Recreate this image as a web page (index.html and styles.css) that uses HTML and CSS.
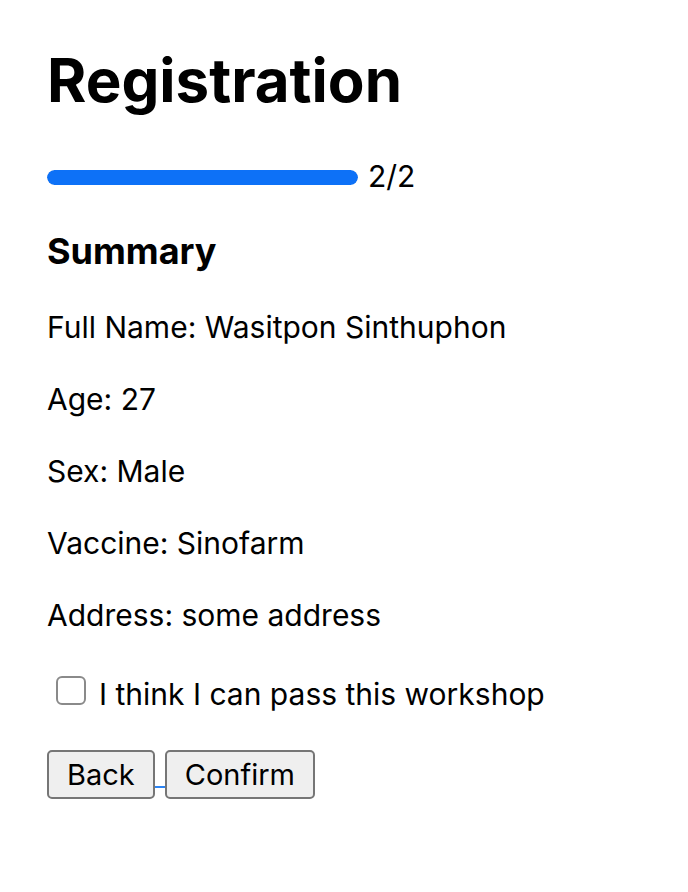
FILE: index.html
```html
<!DOCTYPE html>
<html lang="en">
<head>
<meta charset="utf-8">
<title>Registration</title>
<link rel="stylesheet" href="styles.css">
</head>
<body>
<main class="page">
  <h1 class="title">Registration</h1>
  <div class="progress-row">
    <div class="progress"><div class="progress-fill" style="width:100%"></div></div>
    <span class="progress-label">2/2</span>
  </div>
  <h3 class="section-title">Summary</h3>
  <div class="summary">
    <p class="field">Full Name: Wasitpon Sinthuphon</p>
    <p class="field">Age: 27</p>
    <p class="field">Sex: Male</p>
    <p class="field">Vaccine: Sinofarm</p>
    <p class="field">Address: some address</p>
  </div>
  <label class="check-row">
    <input type="checkbox" class="check">
    <span>I think I can pass this workshop</span>
  </label>
  <div class="actions">
    <button class="btn">Back</button><span class="link-gap"></span><button class="btn">Confirm</button>
  </div>
</main>
</body>
</html>
```
FILE: styles.css
```css
html, body {
  margin: 0;
  padding: 0;
  background: #fff;
}
body {
  font-family: Inter, "Noto Sans", "Liberation Sans", sans-serif;
  color: #000;
}
.page {
  padding: 43px 47px 0 47px;
  display: flex;
  flex-direction: column;
  align-items: flex-start;
}
.title {
  margin: 0;
  font-size: 60px;
  line-height: 74px;
  font-weight: 700;
}
.progress-row {
  margin-top: 41px;
  display: flex;
  align-items: center;
  gap: 10px;
  height: 36px;
}
.progress {
  width: 311px;
  height: 15px;
  border-radius: 8px;
  background: #e6e6e6;
  overflow: hidden;
  position: relative;
  top: 1px;
}
.progress-fill {
  height: 100%;
  background: #0d71f7;
  border-radius: 8px;
}
.progress-label {
  font-size: 30px;
  line-height: 36px;
}
.section-title {
  margin: 35px 0 0 0;
  font-size: 36px;
  line-height: 44px;
  font-weight: 700;
}
.summary {
  margin-top: 36px;
  display: flex;
  flex-direction: column;
  gap: 36px;
}
.field {
  margin: 0;
  font-size: 30px;
  line-height: 36px;
}
.check-row {
  margin-top: 43px;
  display: flex;
  align-items: flex-start;
  gap: 13px;
  font-size: 30px;
  line-height: 36px;
}
.check {
  appearance: none;
  -webkit-appearance: none;
  margin: 0 0 0 9px;
  width: 30px;
  height: 29px;
  border: 2px solid #8a8a8a;
  border-radius: 6px;
  background: #fff;
  box-sizing: border-box;
}
.actions {
  margin-top: 38px;
  display: flex;
  align-items: flex-start;
}
.btn {
  font-family: inherit;
  font-size: 29px;
  line-height: 36px;
  height: 49px;
  padding: 0 18px;
  background: #efefef;
  color: #000;
  border: 2px solid #767676;
  border-radius: 5px;
  box-sizing: border-box;
}
.link-gap {
  width: 10px;
  height: 36px;
  border-bottom: 2px solid #2b84f4;
}
```
